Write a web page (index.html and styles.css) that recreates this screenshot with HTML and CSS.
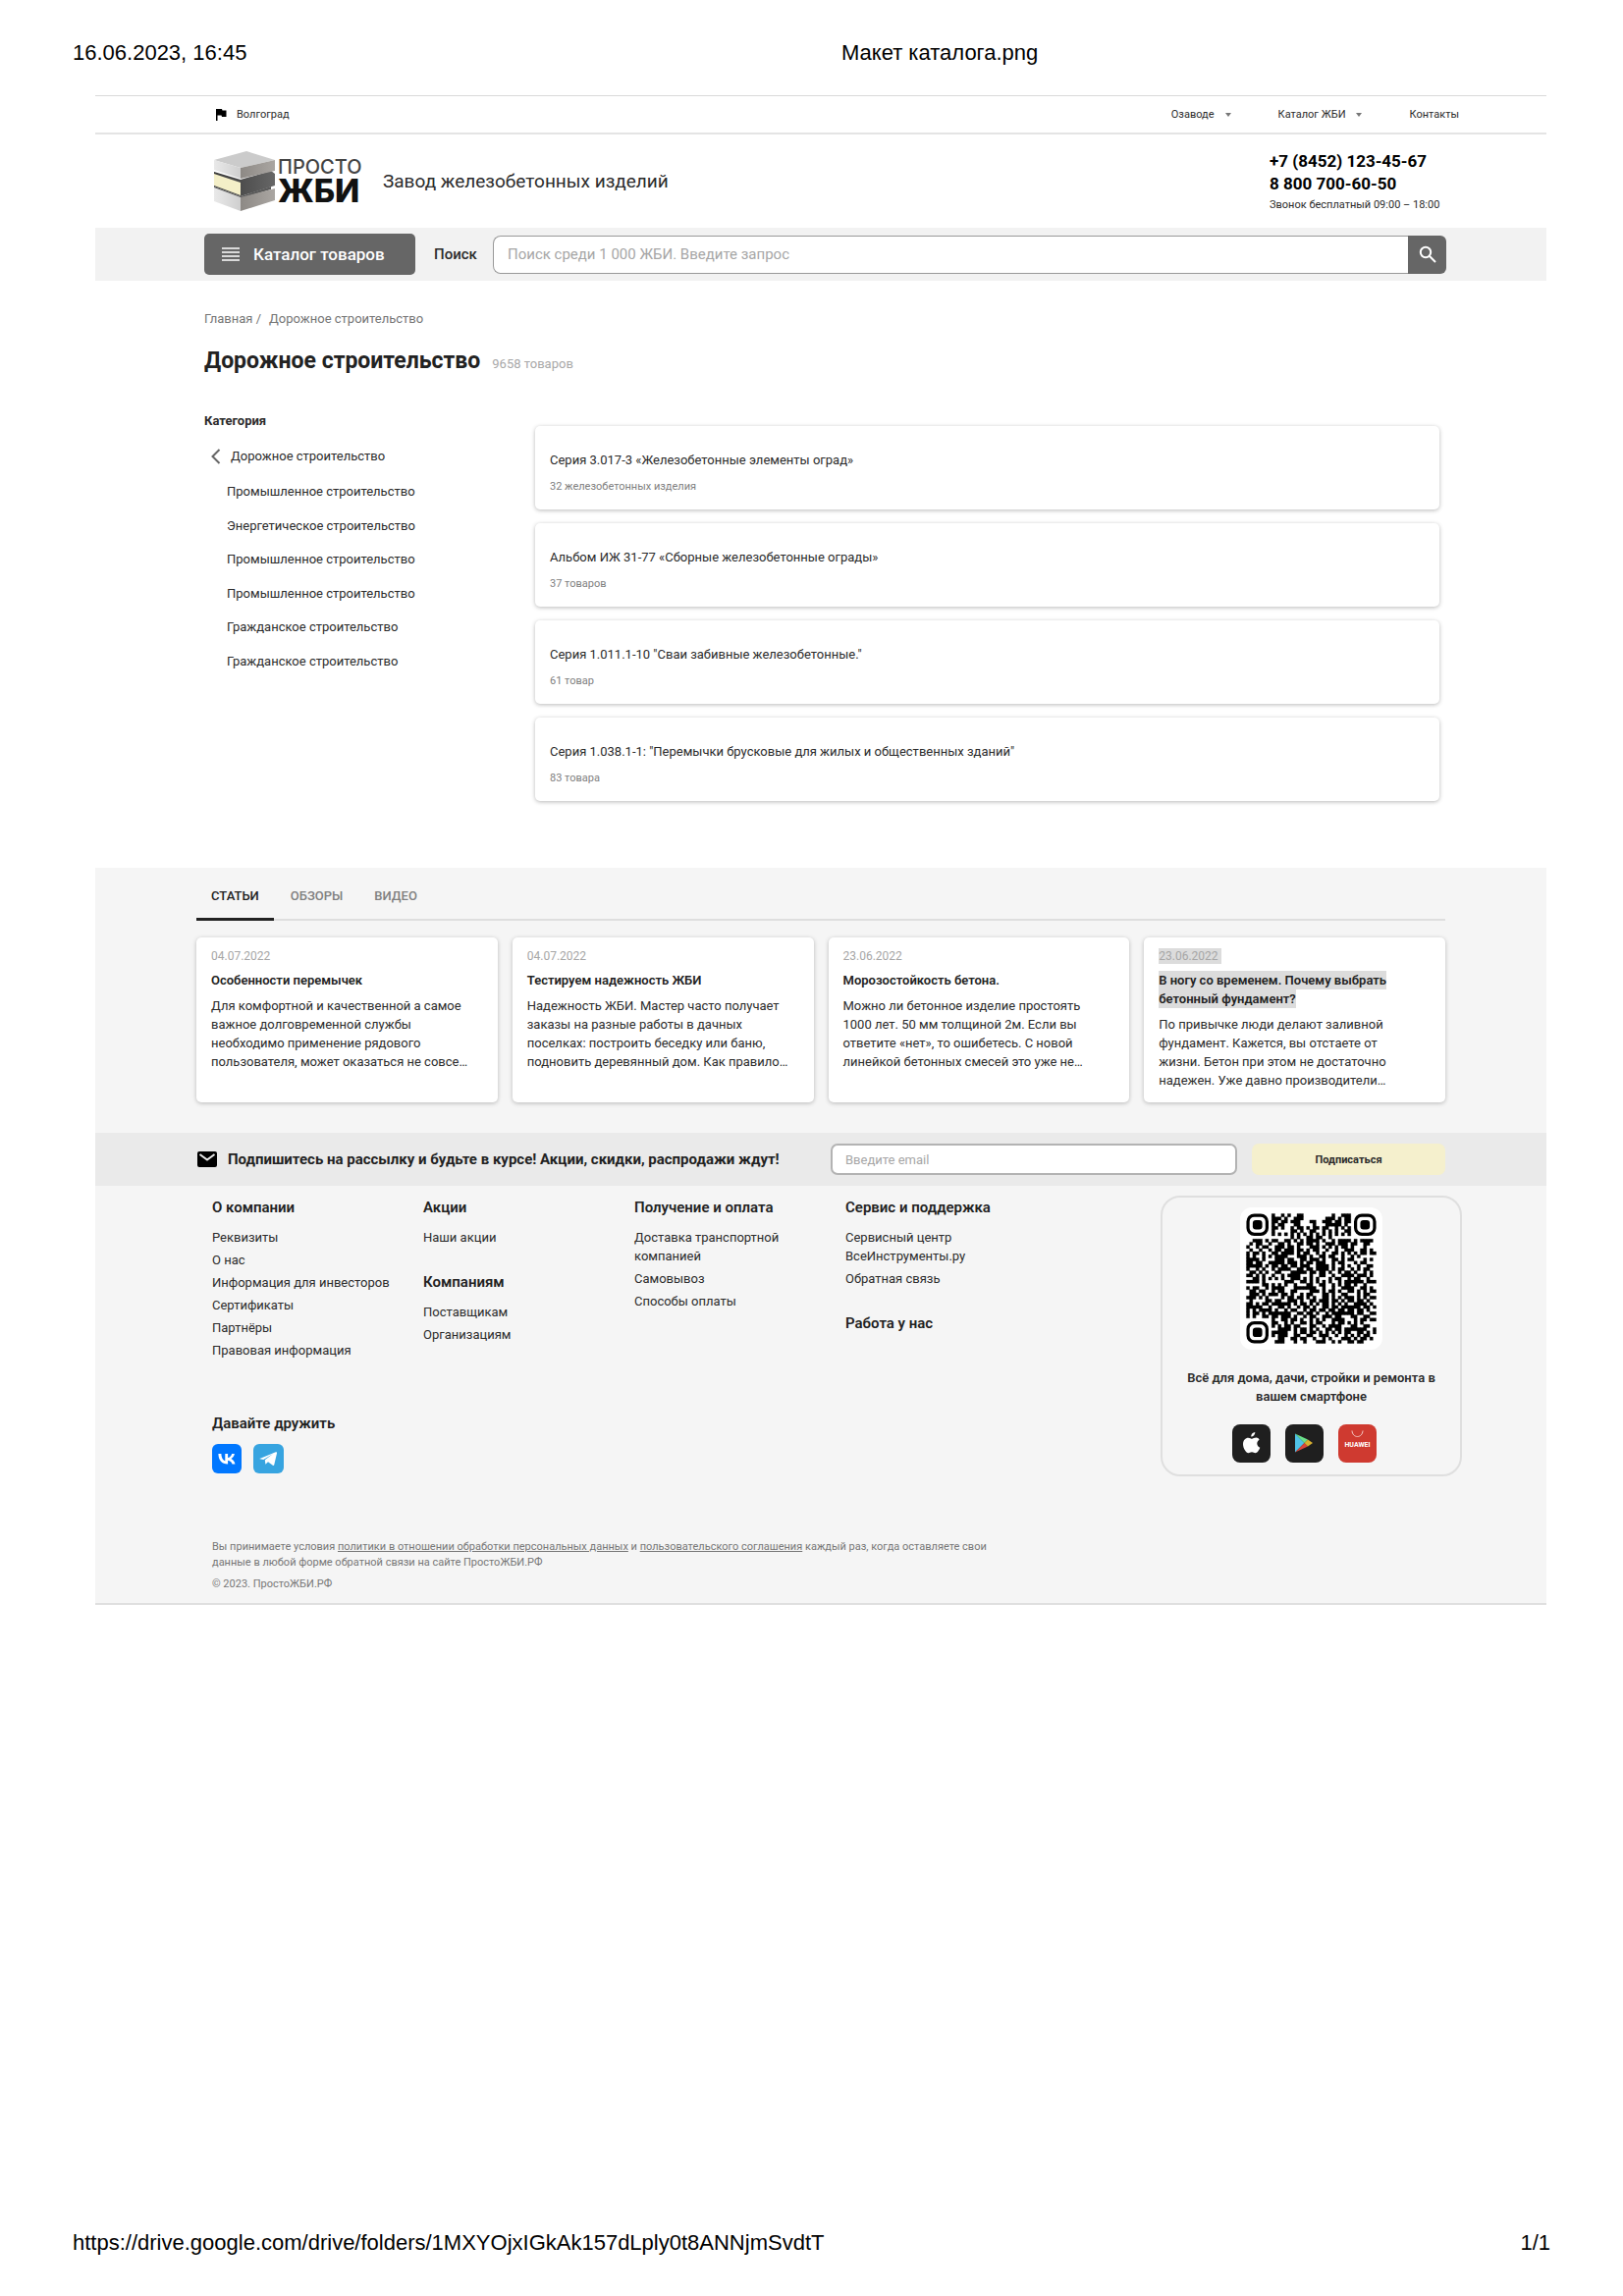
FILE: index.html
```html
<!DOCTYPE html>
<html lang="ru">
<head>
<meta charset="utf-8">
<meta name="viewport" content="width=device-width, initial-scale=1">
<title>Макет каталога.png</title>
<link rel="stylesheet" href="styles.css">
</head>
<body>
<header class="sheet-head">
  <span>16.06.2023, 16:45</span>
  <span>Макет каталога.png</span>
  <span></span>
</header>

<div class="site">
  <div class="topbar">
    <a class="city" href="#">
      <svg width="12" height="12" viewBox="0 0 12 12" aria-hidden="true"><path d="M1 0h6l.5 1.500H11.500V8H7L6.500 6.500H2.500V12H1z"/></svg>
      Волгоград
    </a>
    <nav class="topnav">
      <a href="#">Озаводе <span class="caret"></span></a>
      <a href="#">Каталог ЖБИ <span class="caret"></span></a>
      <a href="#">Контакты</a>
    </nav>
  </div>

  <div class="brand">
    <a class="logo" href="#">
      <svg width="62" height="62" viewBox="0 0 62 62" aria-hidden="true">
        <defs>
          <linearGradient id="dark" x1="0" x2="1"><stop offset="0" stop-color="#3a3a3a"/><stop offset="1" stop-color="#666"/></linearGradient>
          <linearGradient id="side" x1="0" x2="1"><stop offset="0" stop-color="#8d8985"/><stop offset="1" stop-color="#aaa6a2"/></linearGradient>
          <linearGradient id="face" x1="0" x2="1"><stop offset="0" stop-color="#e9e9e9"/><stop offset="1" stop-color="#cfcfcf"/></linearGradient>
        </defs>
        <path d="M0 36L27 46L58 36V39L27 48L0 38z" fill="#5a5a5a"/>
        <path d="M0 37L27 47V61L0 51z" fill="url(#face)"/>
        <path d="M27 47L62 38V50L27 61z" fill="url(#side)"/>
        <path d="M0 21L27 29L58 20L62 23V35L27 46L0 36z" fill="url(#dark)"/>
        <path d="M0 23L27 32V45L0 35z" fill="#f4efc8"/>
        <path d="M0 9L33 0L62 9L27 17z" fill="#cbcbcb"/>
        <path d="M0 9L27 17V28L0 19z" fill="url(#face)"/>
        <path d="M27 17L62 9V20L27 28z" fill="url(#side)"/>
      </svg>
      <span class="logo-text"><span class="logo-small">ПРОСТО</span><span class="logo-big">ЖБИ</span></span>
    </a>
    <p class="slogan">Завод железобетонных изделий</p>
    <div class="phones">
      <a href="tel:+78452123456">+7 (8452) 123-45-67</a>
      <a href="tel:88007006050">8 800 700-60-50</a>
      <span>Звонок бесплатный 09:00 – 18:00</span>
    </div>
  </div>

  <form class="searchbar">
    <button class="catalog" type="button">
      <svg width="18" height="14" viewBox="0 0 18 14" aria-hidden="true"><path d="M0 1h18M0 5h18M0 9h18M0 13h18" stroke="#fff" stroke-width="1.500"/></svg>
      Каталог товаров
    </button>
    <label for="q">Поиск</label>
    <div class="searchbox">
      <input id="q" type="search" placeholder="Поиск среди 1 000 ЖБИ. Введите запрос">
      <button type="submit" aria-label="Найти">
        <svg width="18" height="18" viewBox="0 0 18 18" fill="none" stroke="#fff" stroke-width="2" aria-hidden="true"><circle cx="7" cy="7" r="5.200"/><path d="M11 11l6 6"/></svg>
      </button>
    </div>
  </form>

  <main class="main">
    <nav class="crumbs"><a href="#">Главная</a> /<a class="here" href="#">Дорожное строительство</a></nav>
    <div class="title"><h1>Дорожное строительство</h1><span>9658 товаров</span></div>
    <div class="columns">
      <aside class="cats">
        <h2>Категория</h2>
        <a class="back" href="#">
          <svg width="10" height="16" viewBox="0 0 10 16" fill="none" stroke="#666" stroke-width="2" aria-hidden="true"><path d="M8.500 1L1.500 8l7 7"/></svg>
          Дорожное строительство
        </a>
        <ul>
          <li><a href="#">Промышленное строительство</a></li>
          <li><a href="#">Энергетическое строительство</a></li>
          <li><a href="#">Промышленное строительство</a></li>
          <li><a href="#">Промышленное строительство</a></li>
          <li><a href="#">Гражданское строительство</a></li>
          <li><a href="#">Гражданское строительство</a></li>
        </ul>
      </aside>
      <div class="series">
        <a href="#"><b>Серия 3.017-3 «Железобетонные элементы оград»</b><span>32 железобетонных изделия</span></a>
        <a href="#"><b>Альбом ИЖ 31-77 «Сборные железобетонные ограды»</b><span>37 товаров</span></a>
        <a href="#"><b>Серия 1.011.1-10 "Сваи забивные железобетонные."</b><span>61 товар</span></a>
        <a href="#"><b>Серия 1.038.1-1: "Перемычки брусковые для жилых и общественных зданий"</b><span>83 товара</span></a>
      </div>
    </div>
  </main>

  <section class="articles">
    <div class="tabs">
      <button class="on" type="button">СТАТЬИ</button>
      <button type="button">ОБЗОРЫ</button>
      <button type="button">ВИДЕО</button>
    </div>
    <div class="cards">
      <article>
        <time>04.07.2022</time>
        <h3>Особенности перемычек</h3>
        <p>Для комфортной и качественной а самое<br>важное долговременной службы<br>необходимо применение рядового<br>пользователя, может оказаться не совсе…</p>
      </article>
      <article>
        <time>04.07.2022</time>
        <h3>Тестируем надежность ЖБИ</h3>
        <p>Надежность ЖБИ. Мастер часто получает<br>заказы на разные работы в дачных<br>поселках: построить беседку или баню,<br>подновить деревянный дом. Как правило…</p>
      </article>
      <article>
        <time>23.06.2022</time>
        <h3>Морозостойкость бетона.</h3>
        <p>Можно ли бетонное изделие простоять<br>1000 лет. 50 мм толщиной 2м. Если вы<br>ответите «нет», то ошибетесь. С новой<br>линейкой бетонных смесей это уже не…</p>
      </article>
      <article>
        <time><mark>23.06.2022</mark></time>
        <h3><mark>В ногу со временем. Почему выбрать<br>бетонный фундамент?</mark></h3>
        <p>По привычке люди делают заливной<br>фундамент. Кажется, вы отстаете от<br>жизни. Бетон при этом не достаточно<br>надежен. Уже давно производители…</p>
      </article>
    </div>
  </section>

  <form class="subscribe">
    <svg width="20" height="16" viewBox="0 0 20 16" aria-hidden="true"><rect width="20" height="16" rx="2"/><path d="M2.500 3L10 8.500L17.500 3" fill="none" stroke="#eaeaea" stroke-width="2"/></svg>
    <label for="email">Подпишитесь на рассылку и будьте в курсе! Акции, скидки, распродажи ждут!</label>
    <input id="email" type="email" placeholder="Введите email">
    <button type="submit">Подписаться</button>
  </form>

  <footer class="footer">
    <div class="footer-grid">
      <div class="links">
        <div>
          <h4>О компании</h4>
          <ul>
            <li><a href="#">Реквизиты</a></li>
            <li><a href="#">О нас</a></li>
            <li><a href="#">Информация для инвесторов</a></li>
            <li><a href="#">Сертификаты</a></li>
            <li><a href="#">Партнёры</a></li>
            <li><a href="#">Правовая информация</a></li>
          </ul>
        </div>
        <div>
          <h4>Акции</h4>
          <ul><li><a href="#">Наши акции</a></li></ul>
          <h4>Компаниям</h4>
          <ul>
            <li><a href="#">Поставщикам</a></li>
            <li><a href="#">Организациям</a></li>
          </ul>
        </div>
        <div>
          <h4>Получение и оплата</h4>
          <ul>
            <li><a href="#">Доставка транспортной<br>компанией</a></li>
            <li><a href="#">Самовывоз</a></li>
            <li><a href="#">Способы оплаты</a></li>
          </ul>
        </div>
        <div>
          <h4>Сервис и поддержка</h4>
          <ul>
            <li><a href="#">Сервисный центр<br>ВсеИнструменты.ру</a></li>
            <li><a href="#">Обратная связь</a></li>
          </ul>
          <h4>Работа у нас</h4>
        </div>
        <div class="social">
          <h4>Давайте дружить</h4>
          <div class="social-row">
            <a href="#" aria-label="ВКонтакте"><svg width="30" height="30" viewBox="0 0 30 30"><rect width="30" height="30" rx="6" fill="#07f"/><path d="M15.900 20.500C10 20.500 6.500 16.500 6.400 10h3c.1 4.800 2.200 6.800 3.900 7.200V10h2.800v4.100c1.700-.2 3.500-2 4.100-4.100h2.700c-.4 2.500-2.200 4.300-3.500 5 1.300.6 3.300 2.200 4.100 5.500h-3c-.6-2-2.200-3.500-4.400-3.700v3.700z" fill="#fff"/></svg></a>
            <a href="#" aria-label="Telegram"><svg width="31" height="30" viewBox="0 0 31 30"><rect width="31" height="30" rx="6" fill="#37a4e0"/><path d="M6.500 15L22.800 8.300c.8-.3 1.400.2 1.200 1.200L21.300 21c-.2.900-.8 1.100-1.500.7L15 18.200l-2.600 2.500-.6-4.500 8.300-6.200-9.800 6-3.500-.8c-.7-.2-.8-.7-.3-.2z" fill="#fff"/></svg></a>
          </div>
        </div>
      </div>

      <aside class="app">
        <svg class="qr" id="qr" width="145" height="145" viewBox="-2 -2 45 45" role="img" aria-label="QR-код приложения"></svg>
        <p>Всё для дома, дачи, стройки и ремонта в вашем смартфоне</p>
        <div class="stores">
          <a href="#" aria-label="App Store"><svg width="39" height="39" viewBox="0 0 39 39"><rect width="39" height="39" rx="8" fill="#1f1f1f"/><path d="M23.300 8c.2 2.400-1.800 4.700-4.100 4.600C18.900 10.300 21 8.200 23.300 8zM27.600 15.700c-3.400 2-2.900 6.700.7 8.100-.9 2.600-2.900 5.400-4.700 5.400-1.400 0-1.900-.9-3.600-.9s-2.300.9-3.600.9c-2.200 0-5.400-4.700-5.400-9 0-4.200 2.700-6.500 5.300-6.500 1.600 0 2.900 1.100 3.800 1.100.9 0 2.500-1.200 4.400-1.200 1.200 0 2.500.7 3.100 2.100z" fill="#fff"/></svg></a>
          <a href="#" aria-label="Google Play"><svg width="39" height="39" viewBox="0 0 39 39"><rect width="39" height="39" rx="8" fill="#1f1f1f"/><path d="M10 9.500L19.500 19 10 28.500z" fill="#4fc3e8"/><path d="M10 9.500l13 6-3.500 3.500z" fill="#6ae08a"/><path d="M10 28.500L19.500 19l3.500 3.500z" fill="#d9453b"/><path d="M23 15.500l5 3.500-5 3.500-3.500-3.500z" fill="#d8b02f"/></svg></a>
          <a href="#" aria-label="Huawei AppGallery"><svg width="39" height="39" viewBox="0 0 39 39"><rect width="39" height="39" rx="8" fill="#cf3a30"/><path d="M14 6.500c.5 8 10.500 8 11 0" fill="none" stroke="#f3c9c5" stroke-width="1"/><text x="19.500" y="23" text-anchor="middle" class="huawei">HUAWEI</text></svg></a>
        </div>
      </aside>
    </div>

    <div class="legal">
      <p>Вы принимаете условия <a href="#">политики в отношении обработки персональных данных</a> и <a href="#">пользовательского соглашения</a> каждый раз, когда оставляете свои<br>данные в любой форме обратной связи на сайте ПростоЖБИ.РФ</p>
      <p>© 2023. ПростоЖБИ.РФ</p>
    </div>
  </footer>
</div>

<footer class="sheet-foot">
  <span>https://drive.google.com/drive/folders/1MXYOjxIGkAk157dLply0t8ANNjmSvdtT</span>
  <span>1/1</span>
</footer>
<script src="qr.js"></script>
</body>
</html>
```
FILE: qr.js
```js
// Modules of the code, 41 x 41; the three finder squares are drawn separately.
const rows = [
  "........#..#.#..##.........#..###........",
  "........###.#..###.......###.#.##........",
  "........##.##.###...##..###.##.##........",
  "........#.##...##....#...#####.#.........",
  "........##.#..#.##.#.##.##..#.#.#........",
  "........#.....##.#..##..#.#.#..##........",
  "........#.#.#.#.#.#.#.#.#.#.#.#.#........",
  "..............#.#..##.##..#..............",
  "..###.#.##..##.#.#.####.#..#.####.#.####.",
  ".#.##..#..##.#..##.##.#..###.###.##..##..",
  "#..#.##..###.##.#...###.#.#.#.##.#...#...",
  ".#..#..#.##.###.##.#.##..#..#..###..##.#.",
  "#.##.#..##.####.#.##..#.#..##.#.#.#.##.##",
  "#.#..#.#.####...###.#..##.##..#..#.#.....",
  "####.#...###.##..##.###.#..##.#.##...#.#.",
  "##.##..#####.###.#.##.###..#.##...#.##...",
  "#####.#.##.##.##.###..####.#..#.#..#..##.",
  "#..#.#..#.####..##.##.####.#.##..#.#.##..",
  ".##.#.#..##...#####.##.##.#..#.##.#..#.#.",
  "##.#.#..#..#.####...#..##..#..####.###.#.",
  "..##.#.#.#.#..###.#.#.#...#.##..#.##..#..",
  "####.#......###..##.#.#.#.#..#.######.###",
  ".....##.#.#.#..#...##..##..#.#.##.#..#...",
  "#.##..#.####...#######..#..#..####..##.#.",
  ".##.##..#.##..##....###.#.##.#..##.#.#.##",
  ".###.#.###.##.#..#.##...##.#..##...#.##..",
  "###.#.#....#.##.##.#.#..##.#.#.###.#.#.##",
  ".#....##.##..###.#..##.###.##.#.##.##.#..",
  "##.#.##.######.#.##.#.#.##.#.#.#..####.#.",
  "#####..#..##.#..#.##.#..##.##.######.##.#",
  "#.#.####.#..#.##..#.##.##.##.##.##.##.#..",
  "#.##.#.#######..##.##.#..#.#######.##..##",
  "#.#..##.##.###.#..#.##..###.##...##..##..",
  "........#..##.##.#..#.#.#..####...#.##.##",
  "........##..#.#..##.#.##...#.##.#.#.#....",
  "........#.#.##.##...##..#.####...##..##..",
  "..........####.#.##.#.#..##.##.#######..#",
  "........#####..#.##.##.#.#.#.#.##..##.#.#",
  "........#.###..##..##..###..#..#.#.#.##..",
  "..........##..##.##..#..#.#...###.#.##.#.",
  ".........###...#..#...###..#.#..##.##...."
];

let d = "";
rows.forEach((row, y) => {
  [...row].forEach((cell, x) => {
    if (cell === "#") d += `M${x} ${y}h1v1h-1z`;
  });
});

const finder = (x, y) =>
  `<rect x="${x + 0.5}" y="${y + 0.5}" width="6" height="6" rx="2" fill="none" stroke="#000"/>` +
  `<rect x="${x + 2}" y="${y + 2}" width="3" height="3" rx="1"/>`;

document.getElementById("qr").innerHTML =
  `<path d="${d}" stroke="#000" stroke-width=".1"/>` + finder(0, 0) + finder(34, 0) + finder(0, 34);
```
FILE: styles.css
```css
* { box-sizing: border-box; }
body {
  margin: 0;
  min-height: 100vh;
  display: flex;
  flex-direction: column;
  background: #fff;
  color: #2b2b2b;
  font: 13px/19px Roboto, "Liberation Sans", sans-serif;
}
h1, h2, h3, h4, p, ul { margin: 0; padding: 0; }
ul { list-style: none; }
a { color: inherit; text-decoration: none; }
svg { display: block; flex: none; }
button, input { font: inherit; color: inherit; margin: 0; border: 0; padding: 0; }
button { cursor: pointer; }

.sheet-head, .sheet-foot {
  font: 22px/26px "Liberation Sans", Arial, sans-serif;
  color: #000;
  padding: 0 74px;
}
.sheet-head { display: grid; grid-template-columns: 783px 1fr auto; padding-top: 41px; height: 97px; }
.sheet-foot { display: flex; justify-content: space-between; margin-top: auto; padding-bottom: 41px; }

.site { margin: 0 78px 0 97px; }

.topbar {
  display: flex;
  justify-content: space-between;
  align-items: center;
  height: 40px;
  padding: 0 89px 0 122px;
  border-top: 1px solid #d9d9d9;
  border-bottom: 2px solid #e4e4e4;
  font-size: 11px;
}
.city { display: flex; align-items: center; gap: 10px; }
.topnav { display: flex; gap: 48px; }
.topnav a { display: flex; align-items: center; gap: 11px; }
.caret { border: 3px solid transparent; border-top: 4px solid #777; border-bottom: 0; }

.brand { display: flex; align-items: center; height: 95px; padding: 0 98px 0 121px; }
.logo { display: flex; align-items: center; gap: 3px; width: 150px; color: #111; }
.logo-text { display: flex; flex-direction: column; font-family: Inter, Roboto, sans-serif; }
.logo-small { font-size: 20px; line-height: 20px; font-weight: 500; color: #444; }
.logo-big { font-size: 33px; line-height: 29px; font-weight: 800; }
.slogan { font-size: 19px; margin-left: 22px; }
.phones { display: flex; flex-direction: column; width: 184px; margin-left: auto; padding-top: 2px; font-size: 11px; line-height: 20px; white-space: nowrap; }
.phones a { font-size: 17px; line-height: 23px; font-weight: 700; color: #000; }

.searchbar { display: flex; align-items: center; height: 54px; padding: 0 102px 0 111px; background: #f2f2f2; }
.catalog { display: flex; align-items: center; gap: 14px; width: 215px; height: 42px; padding-left: 18px; border-radius: 5px; background: #666; color: #fff; font-size: 17px; font-weight: 500; }
.searchbar label { width: 79px; padding-left: 19px; font-size: 15px; font-weight: 500; }
.searchbox { display: flex; flex: 1; height: 39px; }
.searchbox input { flex: 1; min-width: 0; padding: 0 14px; border: 1px solid #999; border-right: 0; border-radius: 8px 0 0 8px; background: #fff; font-size: 15px; }
.searchbox button { display: grid; place-items: center; width: 39px; border-radius: 0 6px 6px 0; background: #666; }
input::placeholder { color: #a6a6a6; opacity: 1; }

.main { padding: 29px 109px 68px 111px; }
.crumbs { color: #757575; }
.here { margin-left: 8px; }
.title { display: flex; align-items: baseline; gap: 12px; margin-top: 20px; }
.title h1 { font-size: 23px; line-height: 28px; font-weight: 700; color: #222; }
.title span { color: #a8a8a8; }
.columns { display: grid; grid-template-columns: 337px 1fr; margin-top: 37px; }
.cats h2 { font-size: 13px; line-height: 19px; font-weight: 700; }
.back { display: flex; align-items: center; gap: 10px; margin: 17px 0 9px; padding-left: 7px; }
.cats li { padding: 8px 0 8px 23px; }
.cats li:nth-child(even) { padding-bottom: 7px; }
.series { display: flex; flex-direction: column; gap: 14px; padding-top: 15px; }
.series a { display: flex; flex-direction: column; gap: 8px; height: 85px; padding: 25px 15px; border-radius: 5px; box-shadow: 0 1px 4px rgba(0, 0, 0, .28); }
.series b { font-weight: 400; }
.series span { font-size: 11px; color: #808080; }

.articles { padding: 10px 103px 31px; background: #f5f5f5; }
.tabs { display: flex; gap: 2px; border-bottom: 2px solid #dedede; }
.tabs button { height: 44px; margin-bottom: -2px; padding: 0 15px 4px; background: none; color: #808080; font-weight: 500; border-bottom: 3px solid transparent; }
.tabs .on { color: #222; border-color: #222; }
.cards { display: grid; grid-template-columns: repeat(4, 1fr); gap: 15px; margin-top: 17px; }
.cards article { height: 168px; padding: 10px 15px; border-radius: 5px; background: #fff; box-shadow: 0 1px 4px rgba(0, 0, 0, .25); white-space: nowrap; }
.cards time { display: block; font-size: 12px; line-height: 18px; color: #a6a6a6; }
.cards h3 { margin: 6px 0 7px; font-size: 13px; line-height: 19px; font-weight: 600; color: #222; }
mark { background: #dcdcdc; color: inherit; padding: 2px 0; }
.cards time mark { padding: 1px 3px 1px 0; }

.subscribe { display: flex; align-items: center; height: 54px; padding: 0 103px 0 104px; background: #eaeaea; }
.subscribe label { margin: 0 auto 0 11px; font-size: 15px; font-weight: 700; color: #222; white-space: nowrap; }
.subscribe input { width: 414px; height: 32px; padding: 0 13px; border: 2px solid #b3b3b3; border-radius: 7px; background: #fff; }
.subscribe button { width: 197px; height: 32px; margin-left: 15px; border-radius: 7px; background: #f5f0cd; font-size: 11px; font-weight: 700; }

.footer { padding: 10px 86px 5px 119px; background: #f5f5f5; border-bottom: 2px solid #dfdfdf; }
.footer-grid { display: flex; justify-content: space-between; align-items: flex-start; }
.links { display: grid; grid-template-columns: repeat(4, 215px); white-space: nowrap; }
.links h4 { margin: 2px 0 11px; font-size: 15px; line-height: 20px; font-weight: 600; color: #222; }
.links li { margin-bottom: 4px; }
.links ul + h4 { margin-top: 26px; }
.social { grid-row: 2; padding-top: 49px; }
.social-row { display: flex; gap: 12px; }
.app { display: flex; flex-direction: column; align-items: center; width: 307px; height: 286px; padding: 10px 16px; border: 2px solid #dfdfdf; border-radius: 20px; text-align: center; font-weight: 600; }
.qr { border-radius: 12px; background: #fff; }
.app p { margin: 19px 0; }
.stores { display: flex; gap: 15px; margin-right: 15px; }
.huawei { font: 700 7px Roboto, sans-serif; fill: #fff; }
.legal { margin-top: 64px; font-size: 11px; line-height: 16px; color: #777; }
.legal p { margin-bottom: 6px; }
.legal a { text-decoration: underline; }
```
